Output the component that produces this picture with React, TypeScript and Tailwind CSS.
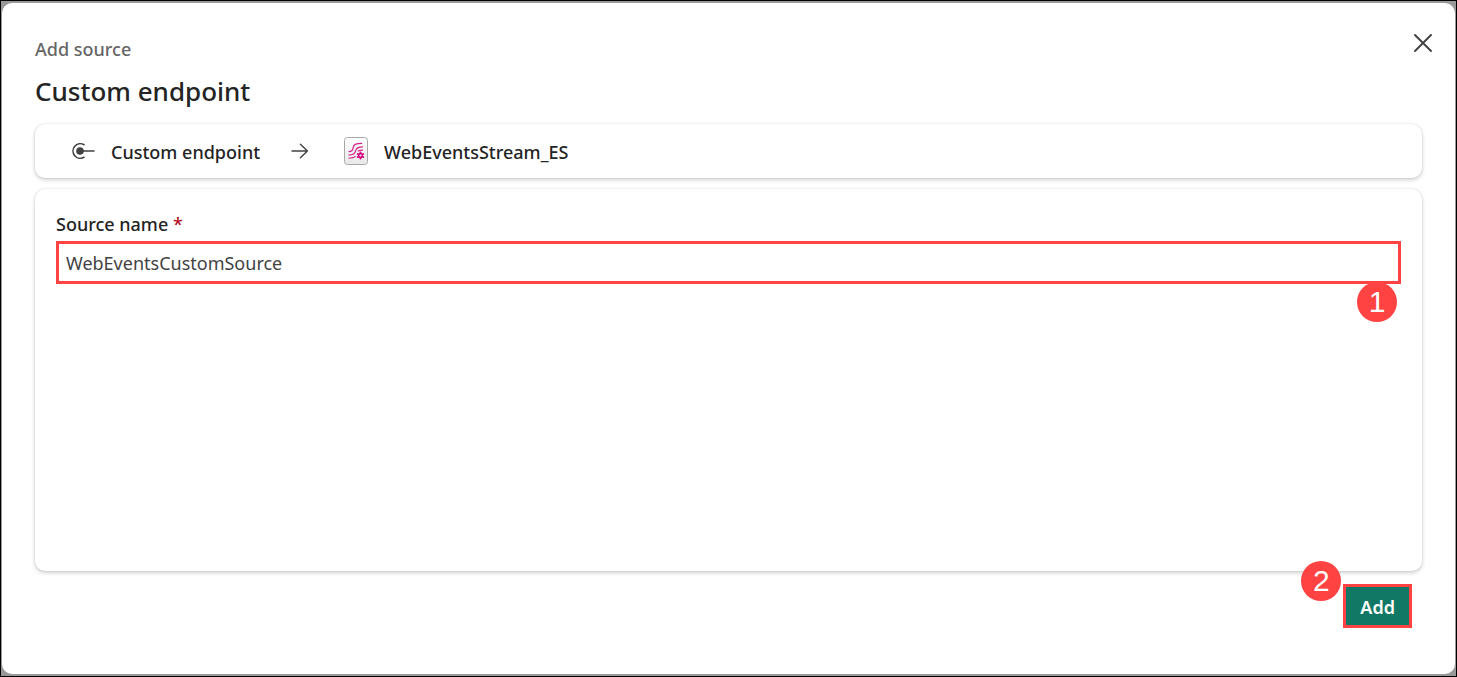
import { useState } from "react";

function EndpointIcon() {
  return (
    <svg width="24" height="18" viewBox="0 0 24 18" fill="none" aria-hidden="true">
      <path d="M13 2.7A7.3 7.3 0 1 0 13 15.3" stroke="#424242" strokeWidth="1.6" strokeLinecap="round" />
      <circle cx="9" cy="9" r="3.8" fill="#424242" />
      <path d="M9 9H23" stroke="#424242" strokeWidth="1.6" strokeLinecap="round" />
    </svg>
  );
}

function ArrowIcon() {
  return (
    <svg width="18" height="16" viewBox="0 0 18 16" fill="none" aria-hidden="true">
      <path d="M1 8H16.3M9.4 1.2L16.4 8L9.4 14.8" stroke="#424242" strokeWidth="1.4" strokeLinecap="round" strokeLinejoin="round" />
    </svg>
  );
}

function EventstreamIcon() {
  return (
    <svg width="24" height="28" viewBox="0 0 24 28" fill="none" aria-hidden="true">
      <defs>
        <linearGradient id="tile" x1="0" y1="0" x2="0" y2="1">
          <stop offset="0" stopColor="#fdfdfd" />
          <stop offset="1" stopColor="#e9e9e9" />
        </linearGradient>
      </defs>
      <rect x="0.5" y="0.5" width="23" height="27" rx="3" fill="url(#tile)" stroke="#a8a8a8" />
      <g stroke="#d6258f" strokeWidth="1.2" strokeLinecap="round">
        <path d="M5 14.6C8.2 14.6 8.8 12.9 9.1 10.8C9.6 7.6 11.4 6.3 17.8 6.3" />
        <path d="M5 17.9C9.8 17.9 11 16.4 11.6 13.8C12.2 10.8 14 9.8 18.6 9.8" />
        <path d="M5 21.1C8 21.1 10 20.8 11.2 19.4M14.2 14C15.2 13.2 16.6 13.1 18.6 13.1" />
      </g>
      <g stroke="#d0007f" strokeWidth="2" strokeLinecap="round">
        <path d="M16.5 15.4V21.6M13.8 17L19.2 20M13.8 20L19.2 17" />
      </g>
      <circle cx="16.5" cy="18.5" r="2.5" fill="#d0007f" />
      <circle cx="16.5" cy="18.5" r="1.1" fill="#f5f5f5" />
    </svg>
  );
}

function CloseIcon() {
  return (
    <svg width="18" height="18" viewBox="0 0 18 18" fill="none" aria-hidden="true">
      <path d="M1 1L17 17M17 1L1 17" stroke="#424242" strokeWidth="1.9" strokeLinecap="round" />
    </svg>
  );
}

const badge =
  "absolute flex size-10 items-center justify-center rounded-full bg-[#ff4343] font-['Liberation_Sans',sans-serif] text-[30px] leading-none font-normal text-white";
const card = "rounded-[10px] bg-white shadow-[0_0_2px_rgba(0,0,0,0.14),0_2px_4px_rgba(0,0,0,0.18)]";

export default function App() {
  const [name, setName] = useState("WebEventsCustomSource");

  return (
    <div className="flex min-h-screen flex-col border border-black bg-[#999] px-px pt-0.5 pb-0.5 font-['Noto_Sans','Open_Sans',sans-serif] text-[#242424]">
      <div
        role="dialog"
        aria-labelledby="title"
        className="flex flex-1 flex-col rounded-[10px] bg-white px-[33px] pt-[31px] pb-[46px]"
      >
        <header className="flex items-start justify-between">
          <div className="pt-px">
            <p className="text-lg leading-7 font-medium text-[#666]">Add source</p>
            <h1 id="title" className="mt-2 text-[26px] leading-10 font-medium">
              Custom endpoint
            </h1>
          </div>
          <button type="button" aria-label="Close" className="-mr-2.5">
            <CloseIcon />
          </button>
        </header>

        <div className={`mt-[13px] flex h-[54px] shrink-0 items-center px-9 text-lg font-medium ${card}`}>
          <EndpointIcon />
          <span className="ml-4 pt-0.5">Custom endpoint</span>
          <span className="mx-[31px]">
            <ArrowIcon />
          </span>
          <span className="ml-1">
            <EventstreamIcon />
          </span>
          <span className="ml-4 pt-0.5">WebEventsStream_ES</span>
        </div>

        <main className={`mt-[11px] flex-1 px-[21px] pt-5 ${card}`}>
          <label htmlFor="source-name" className="block pb-0.5 text-lg leading-[30px] font-medium">
            Source name <span className="text-[#b10e1c]">*</span>
          </label>
          <div className="relative">
            <input
              id="source-name"
              type="text"
              required
              value={name}
              onChange={(e) => setName(e.target.value)}
              className="block h-[43px] w-full border-3 border-[#ff4343] bg-white px-[7px] text-lg font-normal text-[#424242] outline-none"
            />
            <span className={`${badge} top-[41px] right-1`}>1</span>
          </div>
        </main>

        <footer className="mt-[13px] flex justify-end pr-2.5">
          <div className="relative">
            <span className={`${badge} -top-[23px] right-full mr-0.5`}>2</span>
            <button
              type="button"
              className="block h-11 border-3 border-[#ff4343] bg-[#117865] px-3.5 pt-0.5 text-lg leading-none font-semibold text-white"
            >
              Add
            </button>
          </div>
        </footer>
      </div>
    </div>
  );
}
